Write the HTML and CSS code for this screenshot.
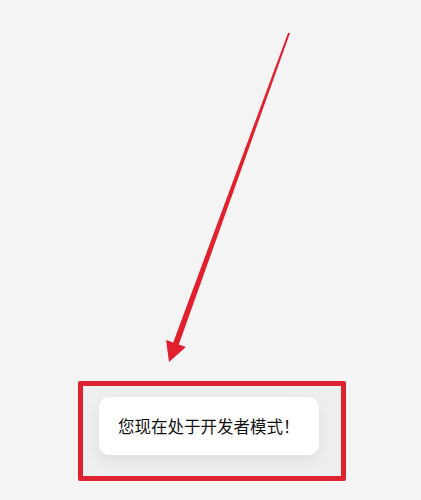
FILE: index.html
```html
<!DOCTYPE html>
<html lang="zh-CN">
<head>
<meta charset="utf-8">
<title>开发者模式</title>
<link rel="stylesheet" href="styles.css">
</head>
<body>
<div class="screen">
  <svg class="arrow" width="421" height="381" viewBox="0 0 421 381" xmlns="http://www.w3.org/2000/svg">
    <polygon points="289.9,33.3 288.1,32.7 173.2,342.4 166.1,339.9 169,362 185.9,347.1 178.8,344.6" fill="#e21f2c"/>
  </svg>
  <div class="highlight">
    <div class="toast">您现在处于开发者模式！</div>
  </div>
</div>
</body>
</html>
```
FILE: styles.css
```css
html, body {
  margin: 0;
  padding: 0;
  background: #f4f4f4;
}
.screen {
  width: 421px;
  height: 500px;
  background: #f4f4f4;
  overflow: hidden;
}
.arrow {
  display: block;
}
.highlight {
  box-sizing: border-box;
  margin-left: 78px;
  width: 268px;
  height: 100px;
  border: 5px solid #dd2230;
  border-radius: 2px;
  padding: 11px 0 0 16px;
  background: #efefef;
  overflow: hidden;
}
.toast {
  width: 201px;
  height: 58px;
  padding-left: 19px;
  background: #ffffff;
  border-radius: 11px;
  box-shadow: 0 6px 16px rgba(0, 0, 0, 0.07);
  display: flex;
  align-items: center;
  font-family: "Noto Sans CJK SC", "Noto Sans", sans-serif;
  font-size: 16.5px;
  font-weight: 400;
  color: #111111;
  white-space: nowrap;
}
```
